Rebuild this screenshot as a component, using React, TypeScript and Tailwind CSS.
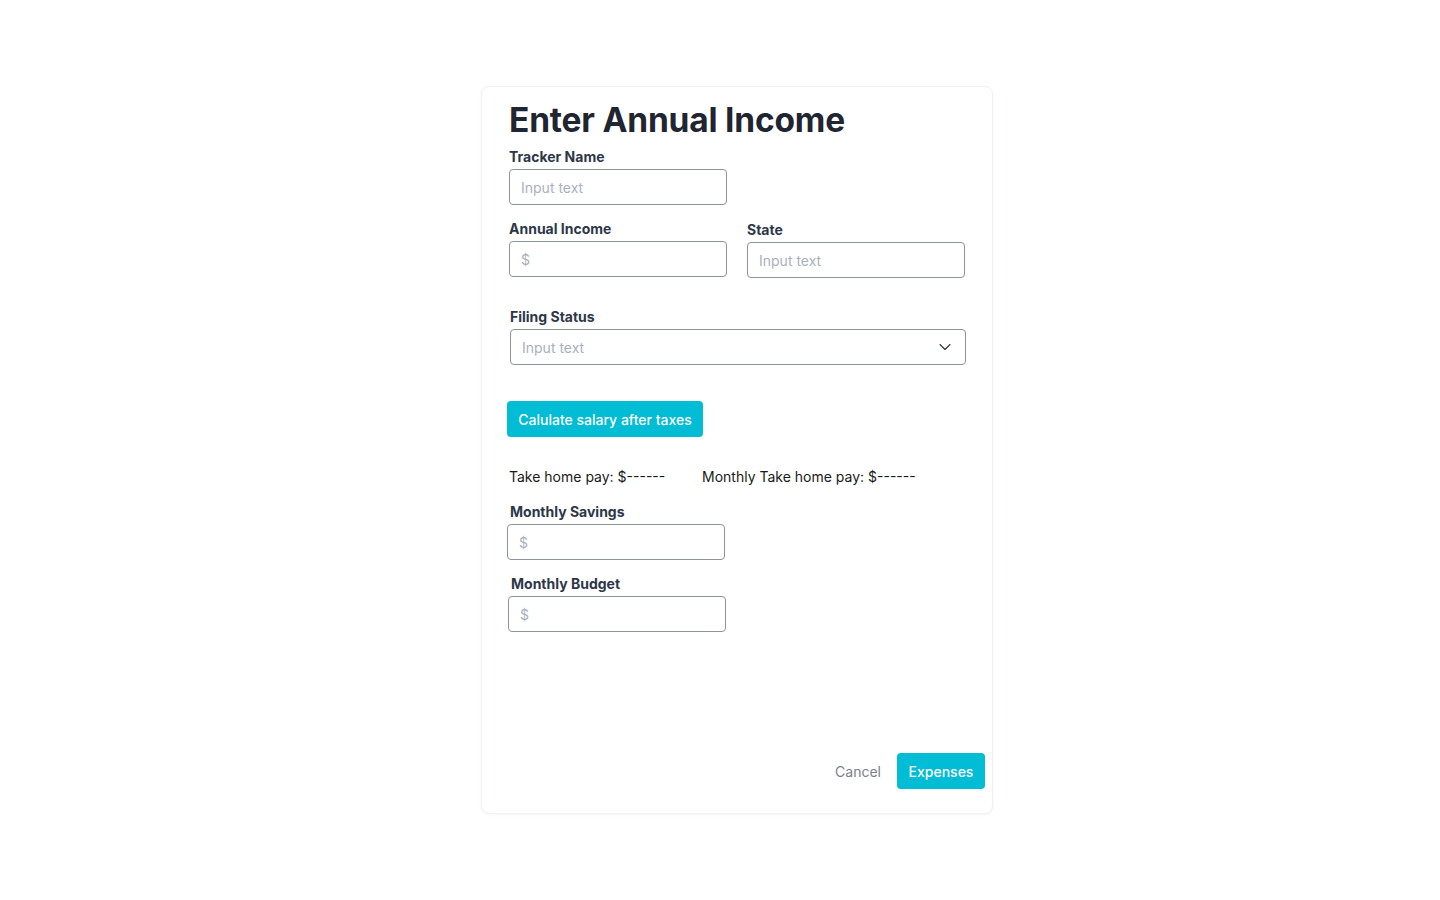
import React from 'react'
import { ChevronDown } from 'lucide-react'

const Label = ({ children, className = '' }: { children: React.ReactNode; className?: string }) => (
  <label className={`block text-[14px] font-bold leading-[20px] text-[#2d3748] ${className}`}>{children}</label>
)

const Input = ({ placeholder, className = '' }: { placeholder: string; className?: string }) => (
  <input
    placeholder={placeholder}
    className={`h-[36px] w-[218px] rounded-[4px] border border-[#8f929c] bg-white px-[11px] text-[14px] text-[#2d3748] outline-none placeholder:text-[#a9b0bd] ${className}`}
  />
)

export default function App() {
  return (
    <div className="min-h-[900px] w-full bg-white pt-[86px] pl-[481px] font-['Inter','Liberation_Sans',sans-serif]">
      <div className="flex h-[728px] w-[512px] flex-col rounded-[8px] border border-[#f0f1f3] bg-white pt-[13px] pr-[7px] pb-[24px] pl-[27px] shadow-[0_1px_3px_rgba(0,0,0,0.04)]">
        <h1 className="text-[33.5px] font-bold leading-[40px] tracking-[-0.2px] text-[#1f2631]">Enter Annual Income</h1>

        <Label className="mt-[7px]">Tracker Name</Label>
        <Input placeholder="Input text" className="mt-[2px]" />

        <div className="mt-[14px] flex gap-[20px]">
          <div>
            <Label>Annual Income</Label>
            <Input placeholder="$" className="mt-[2px]" />
          </div>
          <div className="mt-[1px]">
            <Label>State</Label>
            <Input placeholder="Input text" className="mt-[2px]" />
          </div>
        </div>

        <div className="mt-[29px] ml-[1px]">
          <Label>Filing Status</Label>
          <div className="relative mt-[2px] h-[36px] w-[456px]">
            <Input placeholder="Input text" className="w-[456px]" />
            <ChevronDown size={20} strokeWidth={1.3} className="pointer-events-none absolute right-[11px] top-[8px] text-[#2d3748]" />
          </div>
        </div>

        <button className="mt-[36px] -ml-[2px] h-[36px] w-[196px] rounded-[4px] bg-[#00bcd4] text-[14px] font-medium text-white">
          Calulate salary after taxes
        </button>

        <div className="mt-[30px] flex text-[14px] leading-[20px] text-[#1a1a1a]">
          <span className="w-[193px]">Take home pay: $------</span>
          <span>Monthly Take home pay: $------</span>
        </div>

        <Label className="mt-[15px] ml-[1px]">Monthly Savings</Label>
        <Input placeholder="$" className="mt-[2px] -ml-[2px]" />

        <Label className="mt-[14px] ml-[2px]">Monthly Budget</Label>
        <Input placeholder="$" className="mt-[2px] -ml-[1px]" />

        <div className="mt-auto flex items-center justify-end gap-[16px]">
          <button className="text-[14px] text-[#7a7f8c]">Cancel</button>
          <button className="h-[36px] w-[88px] rounded-[4px] bg-[#00bcd4] text-[14px] font-medium text-white">Expenses</button>
        </div>
      </div>
    </div>
  )
}
